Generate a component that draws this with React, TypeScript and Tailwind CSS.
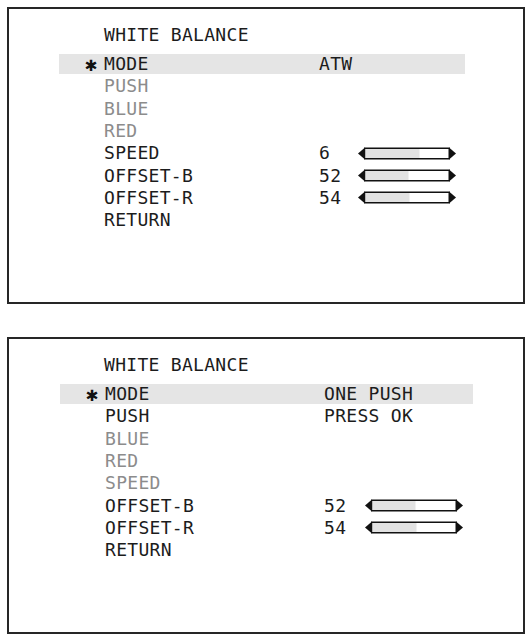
import React from "react";

type Row = {
  label: string;
  dim?: boolean;
  selected?: boolean;
  value?: string;
  bar?: number;
};

type PanelProps = {
  rows: Row[];
  bandLeft: string;
  bandWidth: string;
  labelWidth: string;
  valueWidth: string;
};

const Bar: React.FC<{ fill: number }> = ({ fill }) => {
  return (
    <svg width="98" height="13" viewBox="0 0 98 13" className="block">
      <polygon points="0,6.5 7,0.5 7,12.5" fill="#111" />
      <rect x="6.75" y="1.25" width="84.5" height="10.5" fill="#fff" stroke="#111" strokeWidth="1.5" />
      <rect x="7.5" y="2" width={fill} height="9" fill="#e2e2e2" />
      <polygon points="91,0.5 98,6.5 91,12.5" fill="#111" />
    </svg>
  );
};

const Panel: React.FC<PanelProps> = ({ rows, bandLeft, bandWidth, labelWidth, valueWidth }) => {
  return (
    <div className="h-[297px] w-[518px] border-2 border-[#262626] bg-white">
      <div className="pl-[95px] pt-[15px] text-[18px] leading-[22px] tracking-[0.3px] text-[#1c1c1c]">
        WHITE BALANCE
      </div>
      <div className={`mt-[7px] ${bandLeft} ${bandWidth}`}>
        {rows.map((r) => (
          <div key={r.label} className="h-[22.3px] py-[1px]">
            <div className={`flex h-full items-center pl-[26px] ${r.selected ? "bg-[#e5e5e5]" : ""}`}>
              <div className="w-[19px] text-[20px] leading-[20px] text-[#111]">
                {r.selected ? "✱" : ""}
              </div>
              <div
                className={`${labelWidth} text-[18px] leading-[22px] tracking-[0.3px] ${
                  r.dim ? "text-[#8c8c8c]" : "text-[#1c1c1c]"
                }`}
              >
                {r.label}
              </div>
              <div
                className={`${
                  r.bar !== undefined ? valueWidth : ""
                } text-[18px] leading-[22px] tracking-[0.3px] text-[#1c1c1c]`}
              >
                {r.value}
              </div>
              {r.bar !== undefined && <Bar fill={r.bar} />}
            </div>
          </div>
        ))}
      </div>
    </div>
  );
};

const App: React.FC = () => {
  const atw: Row[] = [
    { label: "MODE", selected: true, value: "ATW" },
    { label: "PUSH", dim: true },
    { label: "BLUE", dim: true },
    { label: "RED", dim: true },
    { label: "SPEED", value: "6", bar: 54 },
    { label: "OFFSET-B", value: "52", bar: 43 },
    { label: "OFFSET-R", value: "54", bar: 44 },
    { label: "RETURN" },
  ];
  const onePush: Row[] = [
    { label: "MODE", selected: true, value: "ONE PUSH" },
    { label: "PUSH", value: "PRESS OK" },
    { label: "BLUE", dim: true },
    { label: "RED", dim: true },
    { label: "SPEED", dim: true },
    { label: "OFFSET-B", value: "52", bar: 43 },
    { label: "OFFSET-R", value: "54", bar: 44 },
    { label: "RETURN" },
  ];

  return (
    <div className="min-h-[638px] w-[531px] bg-white pl-[7px] pt-[7px] font-['DejaVu_Sans_Mono',monospace]">
      <Panel rows={atw} bandLeft="ml-[50px]" bandWidth="w-[406px]" labelWidth="w-[215px]" valueWidth="w-[39px]" />
      <div className="h-[33px]" />
      <Panel rows={onePush} bandLeft="ml-[51px]" bandWidth="w-[413px]" labelWidth="w-[219px]" valueWidth="w-[41px]" />
    </div>
  );
};

export default App;
